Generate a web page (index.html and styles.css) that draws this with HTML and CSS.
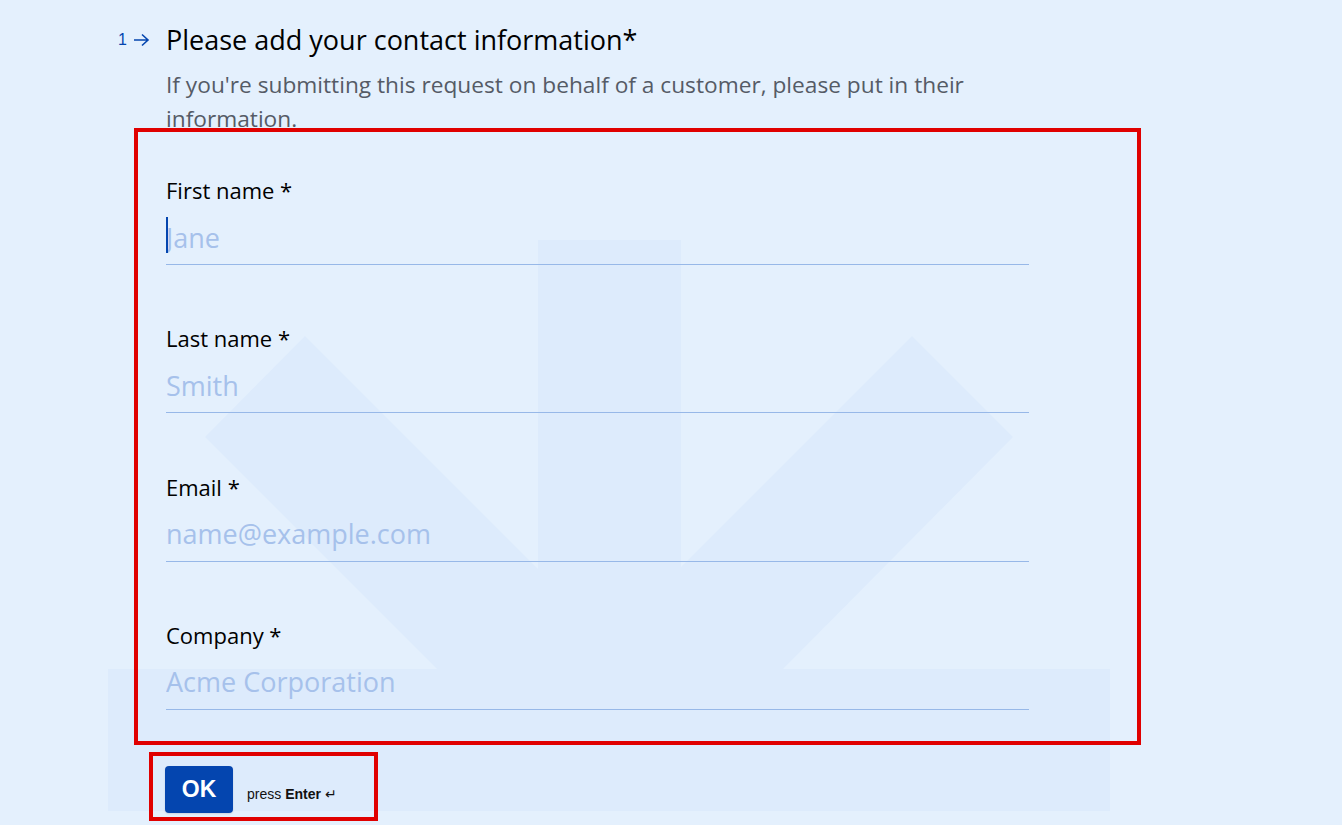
FILE: index.html
```html
<!DOCTYPE html>
<html lang="en">
<head>
<meta charset="utf-8">
<title>Contact information</title>
<link rel="stylesheet" href="styles.css">
</head>
<body>
<svg class="watermark" width="1342" height="825" viewBox="0 0 1342 825" aria-hidden="true">
  <path d="M538 240 L681 240 L681 567 L912 336 L1013 437 L783 669 L1110 669 L1110 811 L108 811 L108 669 L437 669 L205 437 L305 336 L538 569 Z" fill="#ddebfc"/>
</svg>
<main class="page">
  <section class="question">
    <div class="qnum">
      <span class="num">1</span>
      <svg class="arrow" width="17" height="14" viewBox="0 0 17 14"><path d="M1 7 H15 M9 1.5 L15 7 L9 12.5" fill="none" stroke="#0445af" stroke-width="1.6"/></svg>
    </div>
    <div class="qbody">
      <h1 class="title">Please add your contact information*</h1>
      <p class="desc">If you're submitting this request on behalf of a customer, please put in their information.</p>
      <div class="fields">
        <label class="field">
          <span class="label">First name *</span>
          <span class="input-wrap caret"><input type="text" placeholder="Jane"></span>
        </label>
        <label class="field">
          <span class="label">Last name *</span>
          <span class="input-wrap"><input type="text" placeholder="Smith"></span>
        </label>
        <label class="field">
          <span class="label">Email *</span>
          <span class="input-wrap"><input type="email" placeholder="name@example.com"></span>
        </label>
        <label class="field">
          <span class="label">Company *</span>
          <span class="input-wrap"><input type="text" placeholder="Acme Corporation"></span>
        </label>
      </div>
      <div class="actions">
        <button class="ok" type="button">OK</button>
        <span class="hint">press <b>Enter</b> ↵</span>
      </div>
    </div>
  </section>
</main>
</body>
</html>
```
FILE: styles.css
```css
html, body {
  margin: 0;
  padding: 0;
  background: #e4f0fd;
  height: 825px;
  overflow: hidden;
}
body {
  position: relative;
  font-family: "Open Sans", "Noto Sans", sans-serif;
  color: #000;
}
.watermark {
  position: absolute;
  left: 0;
  top: 0;
  z-index: 0;
}
.page {
  position: relative;
  z-index: 1;
  padding: 22px 0 0 118px;
}
.question {
  display: flex;
}
.qnum {
  width: 48px;
  flex: none;
  display: flex;
  align-items: center;
  height: 36px;
  color: #0445af;
  font-family: "Liberation Sans", sans-serif;
  font-size: 16px;
}
.num {
  width: 15px;
}
.arrow {
  display: block;
}
.qbody {
  width: 863px;
}
.title {
  margin: 0;
  font-size: 27px;
  font-weight: 400;
  line-height: 36px;
  color: #000;
}
.desc {
  margin: 10px 0 -8px;
  font-size: 22.7px;
  line-height: 34px;
  color: #555b66;
  width: 860px;
}
.fields {
  margin: 0 0 0 -32px;
  width: 1007px;
  box-sizing: border-box;
  border: 4px solid #e00000;
  padding: 44px 108px 31px 28px;
  display: flex;
  flex-direction: column;
  gap: 59.3px;
}
.field {
  display: flex;
  flex-direction: column;
}
.label {
  font-size: 22px;
  line-height: 28px;
}
.input-wrap {
  position: relative;
  display: block;
  margin-top: 14px;
  border-bottom: 1px solid #97b8e8;
}
.input-wrap input {
  display: block;
  width: 100%;
  box-sizing: border-box;
  border: 0;
  background: transparent;
  outline: none;
  padding: 0 0 8px;
  font-family: "Open Sans", "Noto Sans", sans-serif;
  font-size: 27px;
  line-height: 38px;
  height: 46px;
  color: #000;
}
.input-wrap input::placeholder {
  color: #a6c1eb;
}
.caret::before {
  content: "";
  position: absolute;
  left: 0;
  top: -1px;
  width: 2px;
  height: 36px;
  background: #0445af;
}
.actions {
  margin: 7px 0 0 -17px;
  width: 229px;
  height: 69px;
  box-sizing: border-box;
  border: 4px solid #e00000;
  padding: 10px 0 0 12px;
  display: flex;
  align-items: flex-start;
  gap: 14px;
}
.ok {
  width: 68px;
  height: 47px;
  border: 0;
  border-radius: 4px;
  background: #0445af;
  color: #fff;
  font-family: "Liberation Sans", sans-serif;
  font-weight: 700;
  font-size: 23px;
  padding: 0;
  box-shadow: 0 1px 2px rgba(0,0,0,0.12);
}
.hint {
  font-family: "Liberation Sans", sans-serif;
  font-size: 14px;
  line-height: 20px;
  color: #111;
  margin-top: 18px;
}
.hint b {
  font-weight: 700;
}
```
